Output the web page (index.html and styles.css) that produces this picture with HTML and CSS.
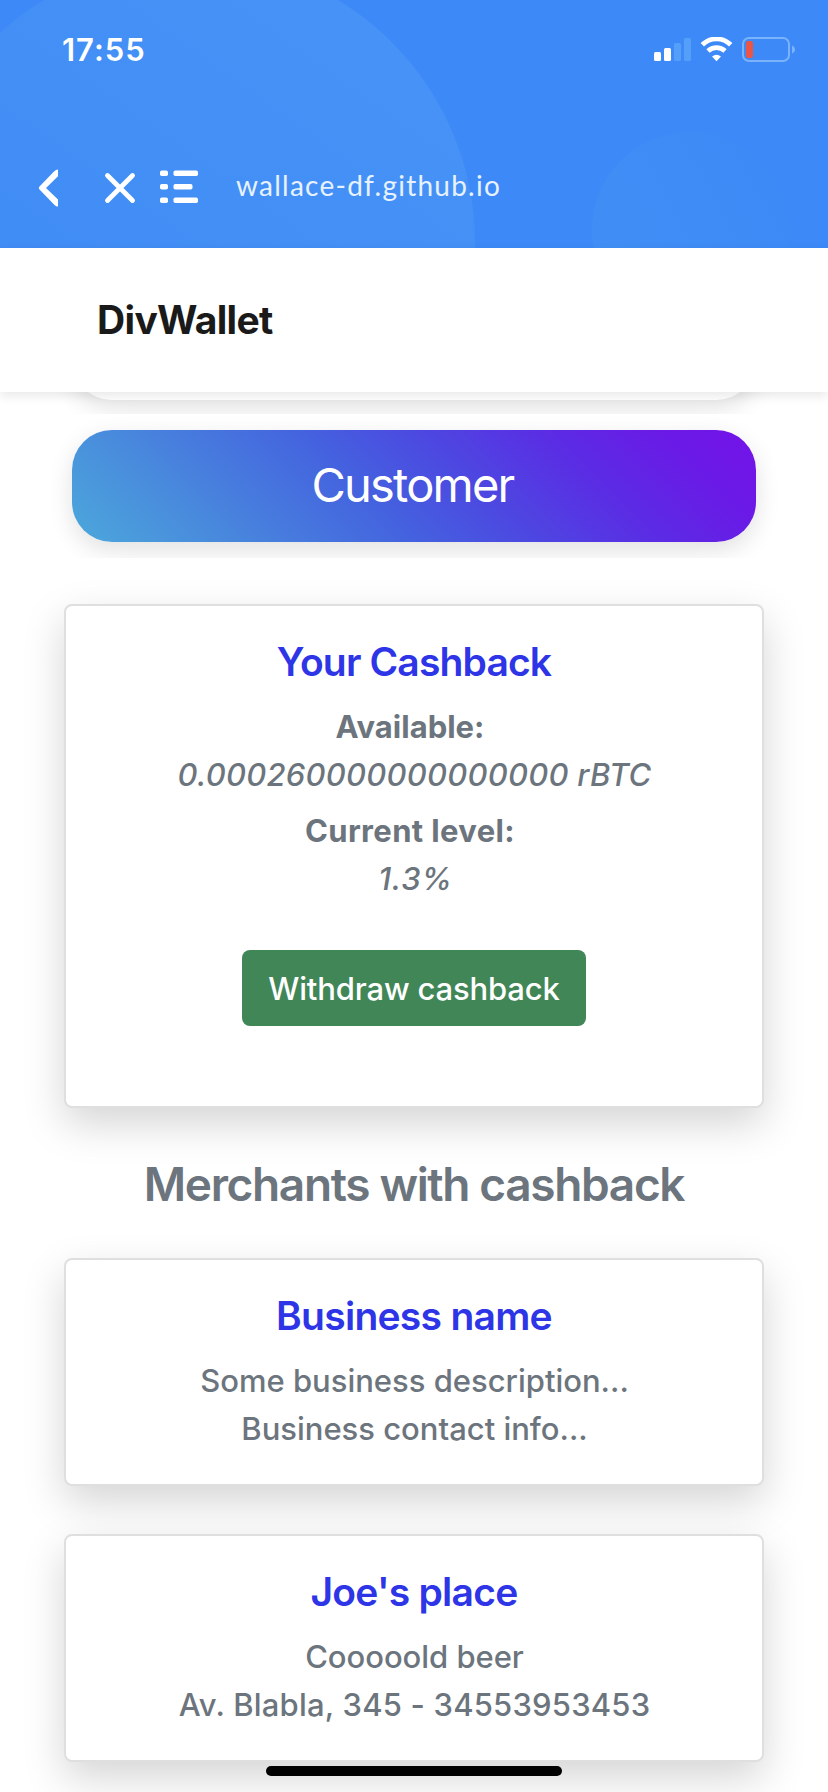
FILE: index.html
```html
<!DOCTYPE html>
<html lang="en">
<head>
<meta charset="utf-8">
<title>DivWallet</title>
<link rel="stylesheet" href="styles.css">
</head>
<body>
<div class="screen">
  <header class="browser">
    <svg class="bubbles" width="828" height="248" viewBox="0 0 828 248" aria-hidden="true">
      <defs>
        <linearGradient id="big" x1="0.75" y1="0.1" x2="0.25" y2="0.8">
          <stop offset="0" stop-color="#4692f6"/><stop offset="1" stop-color="#3e8bf5"/>
        </linearGradient>
        <linearGradient id="small" x1="0.1" y1="0.6" x2="0.85" y2="0.2">
          <stop offset="0" stop-color="#408ef5"/><stop offset="1" stop-color="#3d8af6"/>
        </linearGradient>
      </defs>
      <circle cx="191" cy="243" r="284" fill="url(#big)"/>
      <circle cx="690" cy="230" r="98" fill="url(#small)"/>
    </svg>
    <div class="status">
      <span class="time">17:55</span>
      <svg class="indicators" width="142" height="26" viewBox="0 0 142 26" aria-hidden="true">
        <g fill="#fff">
          <rect x="0" y="15" width="7" height="9" rx="1.5"/>
          <rect x="10" y="11" width="7" height="13" rx="1.5"/>
        </g>
        <g fill="#549ff9">
          <rect x="20" y="6" width="7" height="18" rx="1.5"/>
          <rect x="30" y="1" width="7" height="23" rx="1.5"/>
        </g>
        <g fill="none" stroke="#fff" stroke-width="4.800">
          <path d="M48.300 7.800a20.200 20.200 0 0 1 28.400 0"/>
          <path d="M54 14a12.200 12.200 0 0 1 17 0"/>
        </g>
        <path fill="#fff" d="M58 19.600q4.500-3.700 9 0L62.500 24.200z"/>
        <rect x="89" y="1" width="46" height="23" rx="6" fill="none" stroke="#7ab3fa" stroke-width="2"/>
        <rect x="92" y="4" width="7" height="17" rx="2.200" fill="#eb5545"/>
        <path fill="#7ab3fa" d="M138 8.500c4 1.500 4 6.500 0 8z"/>
      </svg>
    </div>
    <div class="toolbar">
      <svg class="icon-back" width="20" height="38" viewBox="0 0 20 38" aria-hidden="true">
        <path fill="#fff" d="M20 .5V7.300L8 19 20 30.500V37.500Q18 37.500 16.500 36L1.500 20.600Q0 19 1.500 17.400L16 2.500Q18 .5 20 .5z"/>
      </svg>
      <svg class="icon-close" width="32" height="32" viewBox="0 0 32 32" aria-hidden="true">
        <path d="M3.500 3.500l25 25M28.500 3.500l-25 25" fill="none" stroke="#fff" stroke-width="4.800" stroke-linecap="round"/>
      </svg>
      <svg class="icon-list" width="38" height="34" viewBox="0 0 38 34" aria-hidden="true">
        <g fill="#fff">
          <rect x="0" y="0.500" width="8" height="5.500" rx="1.800"/><rect x="13.500" y="0.500" width="24.500" height="5.500" rx="1.800"/>
          <rect x="0" y="14" width="8" height="5.500" rx="1.800"/><rect x="13.500" y="14" width="19" height="5.500" rx="1.800"/>
          <rect x="0" y="27.500" width="8" height="5.500" rx="1.800"/><rect x="13.500" y="27.500" width="24.500" height="5.500" rx="1.800"/>
        </g>
      </svg>
      <span class="url">wallace-df.github.io</span>
    </div>
  </header>
  <nav class="navbar"><span class="brand">DivWallet</span></nav>
  <main class="page">
    <div class="tab-row tab-row-first"><div class="tab"></div></div>
    <div class="tab-row"><div class="tab tab-active">Customer</div></div>
    <section class="card card-cashback">
      <h5 class="title title-cashback">Your Cashback</h5>
      <p class="label">Available:</p>
      <p class="amount">0.000260000000000000 rBTC</p>
      <p class="label label-level">Current level:</p>
      <p class="amount percent">1.3%</p>
      <button class="withdraw" type="button">Withdraw cashback</button>
    </section>
    <h2 class="section-title">Merchants with cashback</h2>
    <section class="card">
      <h5 class="title">Business name</h5>
      <p class="text">Some business description...</p>
      <p class="text">Business contact info...</p>
    </section>
    <section class="card">
      <h5 class="title">Joe's place</h5>
      <p class="text text-tight">Cooooold beer</p>
      <p class="text text-wide">Av. Blabla, 345 - 34553953453</p>
    </section>
  </main>
  <div class="home-indicator"></div>
</div>
</body>
</html>
```
FILE: styles.css
```css
* { box-sizing: border-box; }

body {
  margin: 0;
  background: #fff;
  font-family: Inter, "Liberation Sans", sans-serif;
  color: #6c757d;
}

h2, h5, p { margin: 0; }

svg { display: block; flex: none; }

.screen {
  position: relative;
  width: 828px;
  height: 1792px;
  overflow: hidden;
}

/* Browser chrome */
.browser {
  position: relative;
  height: 248px;
  background: #3c89f7;
  color: #fff;
  overflow: hidden;
}

.bubbles { position: absolute; top: 0; left: 0; }

.status {
  position: relative;
  display: flex;
  justify-content: space-between;
  padding: 37px 33px 0 62px;
  height: 168px;
}

.indicators { margin-right: -1px; }

.time {
  height: 26px;
  font-size: 31px;
  font-weight: 600;
  line-height: 26px;
  letter-spacing: 1px;
}

.toolbar {
  position: relative;
  display: flex;
  align-items: flex-start;
  padding-left: 38px;
}

.icon-back { margin-top: 1px; }
.icon-close { margin: 4px 0 0 46px; }
.icon-list { margin: 2px 0 0 24px; }

.url {
  margin: -1px 0 0 38px;
  font: 28px/36px Lato, sans-serif;
  letter-spacing: 1.25px;
  color: #e7f2ff;
}

/* Site header */
.navbar {
  position: relative;
  z-index: 1;
  display: flex;
  align-items: center;
  height: 144px;
  padding-left: 97px;
  background: #fff;
  box-shadow: 0 4px 10px rgba(0, 0, 0, .09);
}

.brand {
  font-size: 39px;
  font-weight: 700;
  line-height: 48px;
  letter-spacing: -.67px;
  color: #1a1a1a;
}

/* Role tabs */
.page { display: flex; flex-direction: column; }

.tab-row {
  display: flex;
  height: 144px;
  padding: 16px 72px 0;
  overflow: hidden;
}

.tab-row-first { height: 22px; padding-top: 0; align-items: flex-start; }

.tab {
  flex: 1;
  height: 112px;
  padding-right: 3px;
  border-radius: 40px;
  background: #fff;
  box-shadow: 0 8px 24px rgba(0, 0, 0, .12);
  color: #fff;
  font-size: 47px;
  font-weight: 400;
  line-height: 110px;
  letter-spacing: -1.8px;
  text-align: center;
}

.tab-row-first .tab { margin-top: -104px; }

.tab-active { background: linear-gradient(45deg, #4ca8db, #4462df 43%, #4c49e1 57%, #5c2ae4 75%, #6a1ae6 88%, #7412e8); }

/* Cards */
.card {
  display: flex;
  flex-direction: column;
  align-items: center;
  height: 228px;
  margin: 0 64px 48px;
  padding-top: 32px;
  border: 2px solid #dfdfdf;
  border-radius: 8px;
  background: #fff;
  box-shadow: 0 16px 42px rgba(0, 0, 0, .17);
}

.card-cashback { height: 504px; margin: 46px 64px 46px; }

.title {
  margin-bottom: 17px;
  font-size: 39px;
  font-weight: 600;
  line-height: 48px;
  letter-spacing: -.72px;
  color: #2d35e7;
}

.title-cashback { letter-spacing: -.85px; }

.label {
  padding-right: 8px;
  font-size: 31px;
  font-weight: 700;
  line-height: 48px;
}

.label-level { margin-top: 8px; letter-spacing: .37px; }

.amount {
  padding-left: 1px;
  font-size: 31px;
  font-style: italic;
  font-weight: 500;
  line-height: 48px;
  letter-spacing: .25px;
}

.percent { padding-left: 3px; letter-spacing: .7px; }

.text {
  padding-left: 1px;
  font-size: 31px;
  font-weight: 500;
  line-height: 48px;
  letter-spacing: -.01px;
}

.text-tight { letter-spacing: -.04px; }
.text-wide { letter-spacing: .2px; }

.withdraw {
  width: 344px;
  height: 76px;
  margin-top: 47px;
  padding: 2px 0 0;
  border: 0;
  border-radius: 8px;
  background: #418657;
  color: #fff;
  font: 500 31px/74px Inter, "Liberation Sans", sans-serif;
  letter-spacing: -.16px;
}

.section-title {
  padding-top: 1px;
  margin-bottom: 45px;
  font-size: 46px;
  font-weight: 600;
  line-height: 58px;
  letter-spacing: -1.35px;
  text-align: center;
}

.home-indicator {
  position: absolute;
  left: 266px;
  bottom: 16px;
  width: 296px;
  height: 10px;
  border-radius: 5px;
  background: #000;
}
```
